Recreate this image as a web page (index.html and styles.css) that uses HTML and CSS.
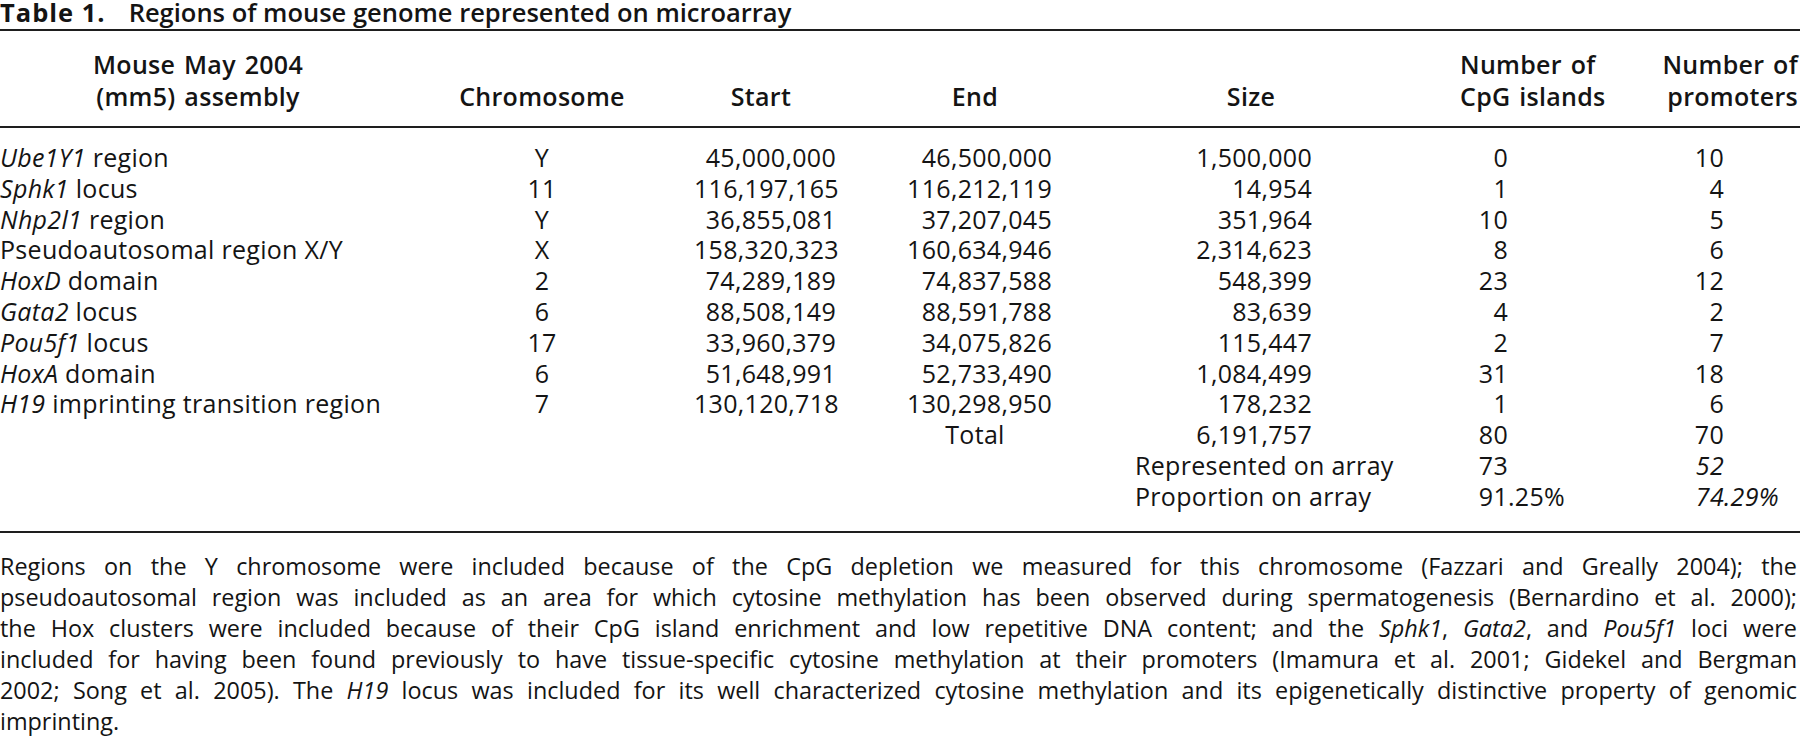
FILE: index.html
```html
<!DOCTYPE html>
<html lang="en">
<head>
<meta charset="utf-8">
<title>Table 1. Regions of mouse genome represented on microarray</title>
<link rel="stylesheet" href="styles.css">
</head>
<body>
<div class="page">
  <h1 class="title"><span class="label">Table 1.</span>Regions of mouse genome represented on microarray</h1>
  <table class="data">
    <colgroup>
      <col class="c1"><col class="c2"><col class="c3"><col class="c4"><col class="c5"><col class="c6"><col class="c7">
    </colgroup>
    <thead>
      <tr>
        <th class="h1">Mouse May 2004<br>(mm5) assembly</th>
        <th class="h2">Chromosome</th>
        <th class="h3">Start</th>
        <th class="h4">End</th>
        <th class="h5">Size</th>
        <th class="h6">Number of<br>CpG islands</th>
        <th class="h7">Number of<br>promoters</th>
      </tr>
    </thead>
    <tbody>
      <tr class="first">
        <td class="d1"><i>Ube1Y1</i> region</td><td class="d2">Y</td><td class="d3">45,000,000</td><td class="d4">46,500,000</td><td class="d5">1,500,000</td><td class="d6"><span class="ip">0</span></td><td class="d7"><span class="ip">10</span></td>
      </tr>
      <tr>
        <td class="d1"><i>Sphk1</i> locus</td><td class="d2">11</td><td class="d3">116,197,165</td><td class="d4">116,212,119</td><td class="d5">14,954</td><td class="d6"><span class="ip">1</span></td><td class="d7"><span class="ip">4</span></td>
      </tr>
      <tr>
        <td class="d1"><i>Nhp2l1</i> region</td><td class="d2">Y</td><td class="d3">36,855,081</td><td class="d4">37,207,045</td><td class="d5">351,964</td><td class="d6"><span class="ip">10</span></td><td class="d7"><span class="ip">5</span></td>
      </tr>
      <tr>
        <td class="d1">Pseudoautosomal region X/Y</td><td class="d2">X</td><td class="d3">158,320,323</td><td class="d4">160,634,946</td><td class="d5">2,314,623</td><td class="d6"><span class="ip">8</span></td><td class="d7"><span class="ip">6</span></td>
      </tr>
      <tr>
        <td class="d1"><i>HoxD</i> domain</td><td class="d2">2</td><td class="d3">74,289,189</td><td class="d4">74,837,588</td><td class="d5">548,399</td><td class="d6"><span class="ip">23</span></td><td class="d7"><span class="ip">12</span></td>
      </tr>
      <tr>
        <td class="d1"><i>Gata2</i> locus</td><td class="d2">6</td><td class="d3">88,508,149</td><td class="d4">88,591,788</td><td class="d5">83,639</td><td class="d6"><span class="ip">4</span></td><td class="d7"><span class="ip">2</span></td>
      </tr>
      <tr>
        <td class="d1"><i>Pou5f1</i> locus</td><td class="d2">17</td><td class="d3">33,960,379</td><td class="d4">34,075,826</td><td class="d5">115,447</td><td class="d6"><span class="ip">2</span></td><td class="d7"><span class="ip">7</span></td>
      </tr>
      <tr>
        <td class="d1"><i>HoxA</i> domain</td><td class="d2">6</td><td class="d3">51,648,991</td><td class="d4">52,733,490</td><td class="d5">1,084,499</td><td class="d6"><span class="ip">31</span></td><td class="d7"><span class="ip">18</span></td>
      </tr>
      <tr>
        <td class="d1"><i>H19</i> imprinting transition region</td><td class="d2">7</td><td class="d3">130,120,718</td><td class="d4">130,298,950</td><td class="d5">178,232</td><td class="d6"><span class="ip">1</span></td><td class="d7"><span class="ip">6</span></td>
      </tr>
      <tr>
        <td class="d1"></td><td class="d2"></td><td class="d3"></td><td class="d4 total">Total</td><td class="d5">6,191,757</td><td class="d6"><span class="ip">80</span></td><td class="d7"><span class="ip">70</span></td>
      </tr>
      <tr>
        <td class="d1"></td><td class="d2"></td><td class="d3"></td><td class="d4"></td><td class="d5 lbl">Represented on array</td><td class="d6"><span class="ip">73</span></td><td class="d7"><i class="ip">52</i></td>
      </tr>
      <tr class="last">
        <td class="d1"></td><td class="d2"></td><td class="d3"></td><td class="d4"></td><td class="d5 lbl">Proportion on array</td><td class="d6"><span class="ip">91</span>.25%</td><td class="d7"><i><span class="ip">74</span>.29%</i></td>
      </tr>
    </tbody>
  </table>
  <p class="note">
    <span class="ln">Regions on the Y chromosome were included because of the CpG depletion we measured for this chromosome (Fazzari and Greally 2004); the</span>
    <span class="ln">pseudoautosomal region was included as an area for which cytosine methylation has been observed during spermatogenesis (Bernardino et al. 2000);</span>
    <span class="ln">the Hox clusters were included because of their CpG island enrichment and low repetitive DNA content; and the <i>Sphk1</i>, <i>Gata2</i>, and <i>Pou5f1</i> loci were</span>
    <span class="ln">included for having been found previously to have tissue-specific cytosine methylation at their promoters (Imamura et al. 2001; Gidekel and Bergman</span>
    <span class="ln">2002; Song et al. 2005). The <i>H19</i> locus was included for its well characterized cytosine methylation and its epigenetically distinctive property of genomic</span>
    <span class="ln end">imprinting.</span>
  </p>
</div>
</body>
</html>
```

FILE: styles.css
```css
html, body {
  margin: 0;
  padding: 0;
  background: #ffffff;
}

body {
  color: #141414;
  font-family: "Open Sans", "Liberation Sans", sans-serif;
}

.page {
  width: 1800px;
  height: 738px;
  overflow: hidden;
}

.title {
  margin: 0;
  font-size: 25.5px;
  line-height: 24px;
  font-weight: 600;
  white-space: nowrap;
}

.title .label {
  font-weight: 700;
  letter-spacing: 1px;
  margin-right: 23px;
}

.data {
  width: 1800px;
  table-layout: fixed;
  border-collapse: separate;
  border-spacing: 0;
  margin-top: 5px;
  border-top: 2px solid #1e1e1e;
  border-bottom: 2px solid #1e1e1e;
  font-size: 25px;
}

.c1 { width: 390px; }
.c2 { width: 304px; }
.c3 { width: 146px; }
.c4 { width: 220px; }
.c5 { width: 400px; }
.c6 { width: 200px; }
.c7 { width: 140px; }

.data th {
  font-weight: 600;
  line-height: 32px;
  padding: 17px 0 14px;
  border-bottom: 2px solid #1e1e1e;
  text-align: center;
  vertical-align: bottom;
  white-space: nowrap;
  letter-spacing: 0.3px;
  word-spacing: 2px;
}

.h1 { padding-left: 6px !important; }
.h3 { padding-right: 12px !important; }
.h4 { padding-left: 50px !important; }
.h5 { padding-right: 18px !important; }
.h6 { padding-right: 70px !important; }
.h7 { text-align: right !important; padding-right: 2px !important; }

.data td {
  padding: 0;
  line-height: 30.8px;
  white-space: nowrap;
  vertical-align: baseline;
  letter-spacing: 0.3px;
}

.data tr.first td { padding-top: 14px; }
.data tr.last td { padding-bottom: 19.4px; }

.d1 { text-align: left; }
.d2 { text-align: center; }
.d3 { text-align: right; padding-right: 4px !important; }
.d4 { text-align: right; padding-right: 8px !important; }
.d4.total { text-align: center; padding-left: 50px !important; padding-right: 0 !important; }
.d5 { text-align: right; padding-right: 148px !important; }
.d5.lbl { text-align: left; padding-left: 75px !important; padding-right: 0 !important; }
.d6 { text-align: left; }
.d7 { text-align: left; }

.d6 .ip {
  display: inline-block;
  width: 48px;
  text-align: right;
}

.d7 .ip {
  display: inline-block;
  width: 64px;
  text-align: right;
}

.note {
  margin: 18.4px 0 0;
  font-size: 23.4px;
  line-height: 31px;
  width: 1797px;
}

.note .ln {
  display: block;
  text-align: justify;
  text-align-last: justify;
}

.note .ln.end {
  text-align: left;
  text-align-last: left;
}
```
